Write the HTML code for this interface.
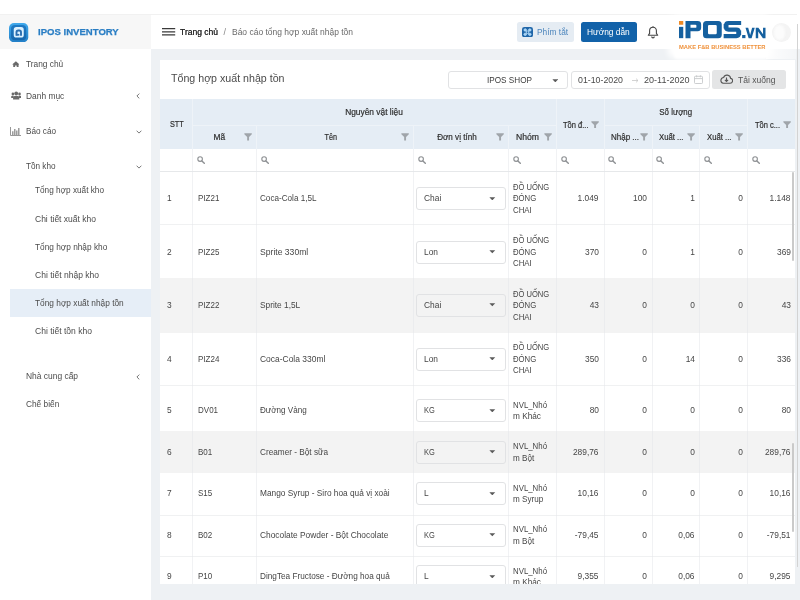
<!DOCTYPE html>
<html><head><meta charset="utf-8"><title>IPOS Inventory</title>
<style>
*{box-sizing:border-box;margin:0;padding:0}
html,body{width:800px;height:600px;overflow:hidden;background:#fff}
body{font-family:"Liberation Sans",sans-serif;font-size:9px;color:#4a4a4a;position:relative;filter:blur(0.300px)}
div,svg{position:absolute}
.t{white-space:nowrap;line-height:12px;height:12px}
.vl{width:1px}
.hl{height:1px}
.sel{border:1px solid #e1e2e4;border-radius:3px;background:#fff}
</style></head><body>
<div style="left:0;top:14px;width:151px;height:35.300px;background:#f7f7f7"></div>
<div style="left:151px;top:14px;width:649px;height:35.300px;background:#fff"></div>
<div style="left:0;top:49.300px;width:151px;height:551px;background:#fff"></div>
<div style="left:151px;top:49.300px;width:649px;height:551px;background:#eef1f4"></div>

<div style="left:0;top:14px;width:797px;height:1px;background:#f1f1f1"></div>
<svg style="left:9.250px;top:22.750px" width="19.250" height="19.250" viewBox="0 0 19.250 19.250"><defs><linearGradient id="g" x1="0" y1="0" x2="0" y2="1"><stop offset="0" stop-color="#3fa9ec"/><stop offset="1" stop-color="#2380c8"/></linearGradient><linearGradient id="g2" x1="0" y1="0" x2="0" y2="1"><stop offset="0" stop-color="#1f7ac4"/><stop offset="1" stop-color="#1767ad"/></linearGradient></defs><rect x="0" y="0" width="19.250" height="19.250" rx="5" fill="url(#g)"/><rect x="2" y="2" width="15.250" height="15.250" rx="4" fill="url(#g2)"/><rect x="4.750" y="4.100" width="10" height="10.500" rx="2.600" fill="#dcf1ff"/><path d="M7.500 12.700V9.300Q7.500 7.500 9.200 7.500H10.300Q12 7.500 12 9.300V12.700" fill="none" stroke="#2b6eb0" stroke-width="1.900"/><path d="M7.500 11.800H10.300" fill="none" stroke="#2b6eb0" stroke-width="1.700"/></svg>
<div class="t" style="left:37.50px;top:26.10px;font-size:9.5px;color:#2a7ec4;transform:scaleX(1.0063);transform-origin:0 50%;font-weight:bold;-webkit-text-stroke:0.250px #2a7ec4;">IPOS INVENTORY</div>
<div class="t" style="left:26.00px;top:57.90px;font-size:9px;color:#4c4c4c;transform:scaleX(0.9269);transform-origin:0 50%;">Trang chủ</div>
<div class="t" style="left:26.00px;top:89.80px;font-size:9px;color:#4c4c4c;transform:scaleX(0.9325);transform-origin:0 50%;">Danh mục</div>
<div class="t" style="left:26.00px;top:125.30px;font-size:9px;color:#4c4c4c;transform:scaleX(0.9084);transform-origin:0 50%;">Báo cáo</div>
<div class="t" style="left:26.00px;top:160.10px;font-size:9px;color:#4c4c4c;transform:scaleX(0.9071);transform-origin:0 50%;">Tồn kho</div>
<div style="left:10px;top:289.300px;width:141px;height:27.700px;background:#e6eef7"></div>
<div class="t" style="left:35.25px;top:184.10px;font-size:9px;color:#4c4c4c;transform:scaleX(0.9145);transform-origin:0 50%;">Tổng hợp xuất kho</div>
<div class="t" style="left:35.25px;top:212.60px;font-size:9px;color:#4c4c4c;transform:scaleX(0.9452);transform-origin:0 50%;">Chi tiết xuất kho</div>
<div class="t" style="left:35.25px;top:240.60px;font-size:9px;color:#4c4c4c;transform:scaleX(0.9208);transform-origin:0 50%;">Tổng hợp nhập kho</div>
<div class="t" style="left:35.25px;top:268.60px;font-size:9px;color:#4c4c4c;transform:scaleX(0.9475);transform-origin:0 50%;">Chi tiết nhập kho</div>
<div class="t" style="left:35.25px;top:296.90px;font-size:9px;color:#4c4c4c;transform:scaleX(0.9247);transform-origin:0 50%;">Tổng hợp xuất nhập tồn</div>
<div class="t" style="left:35.25px;top:325.00px;font-size:9px;color:#4c4c4c;transform:scaleX(0.9495);transform-origin:0 50%;">Chi tiết tồn kho</div>
<div class="t" style="left:26.00px;top:370.00px;font-size:9px;color:#4c4c4c;transform:scaleX(0.9363);transform-origin:0 50%;">Nhà cung cấp</div>
<div class="t" style="left:26.00px;top:398.10px;font-size:9px;color:#4c4c4c;transform:scaleX(0.9229);transform-origin:0 50%;">Chế biến</div>
<svg style="left:11.500px;top:60.500px" width="7.800" height="6.900" viewBox="0 0 9 8"><path d="M4.500 0.300L0.200 4h1.200v3.600h2.200V5.200h1.800v2.400h2.200V4h1.200z" fill="#6a6a6a"/></svg>
<svg style="left:10.500px;top:91.200px" width="10.400" height="9" viewBox="0 0 11 9" preserveAspectRatio="none"><circle cx="5.500" cy="2.400" r="2" fill="#6a6a6a"/><circle cx="2" cy="3" r="1.400" fill="#6a6a6a"/><circle cx="9" cy="3" r="1.400" fill="#6a6a6a"/><path d="M2.200 8.600V6.600q0-1.600 1.600-1.600h3.400q1.600 0 1.600 1.600v2z" fill="#6a6a6a"/><path d="M0.200 7V5.800q0-1 1-1h1.600v2.200zM10.800 7V5.800q0-1-1-1H8.200v2.200z" fill="#6a6a6a"/></svg>
<svg style="left:10px;top:126.500px" width="11" height="9" viewBox="0 0 11 9"><path d="M0.500 0v8.500H11" fill="none" stroke="#8c8c8c" stroke-width="0.900"/><path d="M2.800 8V4.200M4.800 8V2M6.800 8V3.400M8.800 8V1" stroke="#8c8c8c" stroke-width="1.300"/></svg>
<svg style="left:136px;top:92.5px" width="4" height="6" viewBox="0 0 4 6"><path d="M3.300 0.600L0.900 3l2.400 2.400" fill="none" stroke="#777" stroke-width="1"/></svg>
<svg style="left:135.5px;top:129.5px" width="6" height="4" viewBox="0 0 6 4"><path d="M0.600 0.700L3 3.100 5.400 0.700" fill="none" stroke="#777" stroke-width="1"/></svg>
<svg style="left:135.5px;top:164.5px" width="6" height="4" viewBox="0 0 6 4"><path d="M0.600 0.700L3 3.100 5.400 0.700" fill="none" stroke="#777" stroke-width="1"/></svg>
<svg style="left:136px;top:373.5px" width="4" height="6" viewBox="0 0 4 6"><path d="M3.300 0.600L0.900 3l2.400 2.400" fill="none" stroke="#777" stroke-width="1"/></svg>
<svg style="left:162px;top:28px" width="14" height="8" viewBox="0 0 14 8"><path d="M0 0.700h13.200M0 3.800h13.200M0 6.900h13.200" stroke="#3a3a3a" stroke-width="1.200"/></svg>
<div class="t" style="left:180.25px;top:26.00px;font-size:9px;color:#2b2b2b;transform:scaleX(0.9455);transform-origin:0 50%;text-shadow:0 0 0.400px #2b2b2b;">Trang chủ</div>
<div class="t" style="left:223.50px;top:26.00px;font-size:9px;color:#8a8a8a;transform:scaleX(1.0000);transform-origin:0 50%;">/</div>
<div class="t" style="left:232.00px;top:26.00px;font-size:9px;color:#6a6a6a;transform:scaleX(0.9416);transform-origin:0 50%;">Báo cáo tổng hợp xuất nhập tồn</div>
<div style="left:516.800px;top:22.200px;width:57.700px;height:19.600px;background:#e5ecf3;border-radius:2.500px"></div>
<svg style="left:522px;top:27px" width="11" height="10.300" viewBox="0 0 10 10" preserveAspectRatio="none"><rect width="10" height="10" rx="2.200" fill="#1f66a9"/><g fill="#9fd0f5" stroke="#b9defa" stroke-width="0.700"><rect x="3.900" y="3.900" width="2.200" height="2.200" fill="none"/><circle cx="2.900" cy="2.900" r="1.150"/><circle cx="7.100" cy="2.900" r="1.150"/><circle cx="2.900" cy="7.100" r="1.150"/><circle cx="7.100" cy="7.100" r="1.150"/></g></svg>
<div class="t" style="left:536.70px;top:26.00px;font-size:9px;color:#4d86bd;transform:scaleX(0.9300);transform-origin:0 50%;">Phím tắt</div>
<div style="left:580.500px;top:22.200px;width:56.500px;height:19.600px;background:#1262a9;border-radius:2.500px"></div>
<div class="t" style="left:586.50px;top:26.00px;font-size:9px;color:#fff;transform:scaleX(0.9300);transform-origin:0 50%;">Hướng dẫn</div>
<svg style="left:646.500px;top:25.500px" width="12" height="13" viewBox="0 0 12 13"><path d="M6 1.200c-2.200 0-3.400 1.600-3.400 3.600v2.600l-1.300 1.800h9.400l-1.300-1.800v-2.600c0-2-1.200-3.600-3.400-3.600z" fill="none" stroke="#444" stroke-width="1.100" stroke-linejoin="round"/><path d="M4.700 10.600a1.300 1.300 0 0 0 2.600 0" fill="none" stroke="#444" stroke-width="1.100"/><path d="M6 0.300v1" stroke="#444" stroke-width="1.100"/></svg>
<div style="left:160.300px;top:59.500px;width:634.700px;height:524.2px;background:#fff"></div>
<div class="t" style="left:170.50px;top:72.10px;font-size:11.8px;color:#4a4a4a;transform:scaleX(0.9020);transform-origin:0 50%;">Tổng hợp xuất nhập tồn</div>
<div class="sel" style="left:447.500px;top:70.500px;width:120.500px;height:18px"></div>
<div class="t" style="left:487.25px;top:74.00px;font-size:8.6px;color:#3a3a3a;transform:scaleX(0.9511);transform-origin:0 50%;">IPOS SHOP</div>
<svg style="left:551.5px;top:78.5px" width="6.600" height="3.700" viewBox="0 0 7 4"><path d="M0.300 0.300h6.400L3.500 3.600z" fill="#5a5a5a"/></svg>
<div class="sel" style="left:571px;top:70.500px;width:138.500px;height:18px"></div>
<div class="t" style="left:577.70px;top:74.00px;font-size:9px;color:#4a4a4a;transform:scaleX(0.9774);transform-origin:0 50%;">01-10-2020</div>
<svg style="left:631.500px;top:77.500px" width="7" height="5" viewBox="0 0 7 5"><path d="M0 2.500h6M4 0.600l2 1.900-2 1.900" fill="none" stroke="#c8c8c8" stroke-width="0.800"/></svg>
<div class="t" style="left:643.85px;top:74.00px;font-size:9px;color:#4a4a4a;transform:scaleX(1.0028);transform-origin:0 50%;">20-11-2020</div>
<svg style="left:693.500px;top:75px" width="9" height="9" viewBox="0 0 9 9"><rect x="0.500" y="1.300" width="8" height="7.200" rx="0.800" fill="none" stroke="#c6c8cb" stroke-width="0.900"/><path d="M0.500 3.600h8M2.600 0.300v2M6.400 0.300v2" stroke="#c6c8cb" stroke-width="0.900"/></svg>
<div style="left:712.200px;top:70.200px;width:73.800px;height:18.400px;background:#e4e5e6;border-radius:2.500px"></div>
<svg style="left:720px;top:74px" width="13" height="10" viewBox="0 0 13 10"><path d="M3.300 9.300h6.800a2.500 2.500 0 0 0 .5-4.950 3.600 3.600 0 0 0-7-0.800A2.900 2.900 0 0 0 3.300 9.300z" fill="none" stroke="#555" stroke-width="1.100"/><path d="M6.500 3.600v3.600M4.900 5.800l1.600 1.600 1.600-1.600" fill="none" stroke="#555" stroke-width="1.100"/></svg>
<div class="t" style="left:738.00px;top:73.60px;font-size:9px;color:#555;transform:scaleX(0.9488);transform-origin:0 50%;">Tải xuống</div>
<div style="left:160.300px;top:99px;width:634.700px;height:50.200px;background:#e5edf5"></div>
<div class="hl" style="left:192.5px;top:125.250px;width:364.0px;background:#eef3f8"></div>
<div class="hl" style="left:604px;top:125.250px;width:143.5px;background:#eef3f8"></div>
<div class="vl" style="left:192.0px;top:99px;height:50.500px;background:#eef3f8"></div>
<div class="vl" style="left:556.0px;top:99px;height:50.500px;background:#eef3f8"></div>
<div class="vl" style="left:603.5px;top:99px;height:50.500px;background:#eef3f8"></div>
<div class="vl" style="left:747.0px;top:99px;height:50.500px;background:#eef3f8"></div>
<div class="vl" style="left:256.0px;top:125.500px;height:24px;background:#eef3f8"></div>
<div class="vl" style="left:413.0px;top:125.500px;height:24px;background:#eef3f8"></div>
<div class="vl" style="left:508.0px;top:125.500px;height:24px;background:#eef3f8"></div>
<div class="vl" style="left:651.5px;top:125.500px;height:24px;background:#eef3f8"></div>
<div class="vl" style="left:699.0px;top:125.500px;height:24px;background:#eef3f8"></div>
<div class="t" style="left:169.90px;top:117.90px;font-size:9px;color:#2e2e2e;transform:scaleX(0.8118);transform-origin:0 50%;-webkit-text-stroke:0.200px #2e2e2e;">STT</div>
<div class="t" style="left:343.38px;top:105.90px;font-size:9px;color:#2e2e2e;transform:scaleX(0.9309);transform-origin:50% 50%;-webkit-text-stroke:0.200px #2e2e2e;">Nguyên vật liệu</div>
<div class="t" style="left:656.88px;top:105.90px;font-size:9px;color:#2e2e2e;transform:scaleX(0.8746);transform-origin:50% 50%;-webkit-text-stroke:0.200px #2e2e2e;">Số lượng</div>
<div class="t" style="left:213.25px;top:131.00px;font-size:9px;color:#2e2e2e;transform:scaleX(0.9300);transform-origin:50% 50%;-webkit-text-stroke:0.200px #2e2e2e;">Mã</div>
<div class="t" style="left:322.75px;top:131.00px;font-size:9px;color:#2e2e2e;transform:scaleX(0.8060);transform-origin:50% 50%;-webkit-text-stroke:0.200px #2e2e2e;">Tên</div>
<div class="t" style="left:434.54px;top:131.00px;font-size:9px;color:#2e2e2e;transform:scaleX(0.8994);transform-origin:50% 50%;-webkit-text-stroke:0.200px #2e2e2e;">Đơn vị tính</div>
<div class="t" style="left:515.75px;top:131.00px;font-size:9px;color:#2e2e2e;transform:scaleX(0.9580);transform-origin:0 50%;-webkit-text-stroke:0.200px #2e2e2e;">Nhóm</div>
<div class="t" style="left:563.25px;top:118.50px;font-size:9px;color:#2e2e2e;transform:scaleX(0.8356);transform-origin:0 50%;-webkit-text-stroke:0.200px #2e2e2e;">Tồn đ...</div>
<div class="t" style="left:610.75px;top:131.00px;font-size:9px;color:#2e2e2e;transform:scaleX(0.8884);transform-origin:0 50%;-webkit-text-stroke:0.200px #2e2e2e;">Nhập ...</div>
<div class="t" style="left:658.75px;top:131.00px;font-size:9px;color:#2e2e2e;transform:scaleX(0.8592);transform-origin:0 50%;-webkit-text-stroke:0.200px #2e2e2e;">Xuất ...</div>
<div class="t" style="left:706.75px;top:131.00px;font-size:9px;color:#2e2e2e;transform:scaleX(0.8592);transform-origin:0 50%;-webkit-text-stroke:0.200px #2e2e2e;">Xuất ...</div>
<div class="t" style="left:755.00px;top:118.50px;font-size:9px;color:#2e2e2e;transform:scaleX(0.8331);transform-origin:0 50%;-webkit-text-stroke:0.200px #2e2e2e;">Tồn c...</div>
<svg style="left:243.75px;top:133.2px" width="8.200" height="7.800" viewBox="0 0 9 9"><path d="M0.2 0.3h8.600v1.100L5.600 4.700V8.600H3.400V4.700L0.200 1.400z" fill="#a0a5aa"/></svg>
<svg style="left:400.75px;top:133.2px" width="8.200" height="7.800" viewBox="0 0 9 9"><path d="M0.2 0.3h8.600v1.100L5.600 4.700V8.600H3.400V4.700L0.200 1.400z" fill="#a0a5aa"/></svg>
<svg style="left:496.25px;top:133.2px" width="8.200" height="7.800" viewBox="0 0 9 9"><path d="M0.2 0.3h8.600v1.100L5.600 4.700V8.600H3.400V4.700L0.200 1.400z" fill="#a0a5aa"/></svg>
<svg style="left:543.75px;top:133.2px" width="8.200" height="7.800" viewBox="0 0 9 9"><path d="M0.2 0.3h8.600v1.100L5.600 4.700V8.600H3.400V4.700L0.200 1.400z" fill="#a0a5aa"/></svg>
<svg style="left:591.25px;top:120.7px" width="8.200" height="7.800" viewBox="0 0 9 9"><path d="M0.2 0.3h8.600v1.100L5.600 4.700V8.600H3.400V4.700L0.200 1.400z" fill="#a0a5aa"/></svg>
<svg style="left:639.5px;top:133.2px" width="8.200" height="7.800" viewBox="0 0 9 9"><path d="M0.2 0.3h8.600v1.100L5.600 4.700V8.600H3.400V4.700L0.200 1.400z" fill="#a0a5aa"/></svg>
<svg style="left:687.1px;top:133.2px" width="8.200" height="7.800" viewBox="0 0 9 9"><path d="M0.2 0.3h8.600v1.100L5.600 4.700V8.600H3.400V4.700L0.200 1.400z" fill="#a0a5aa"/></svg>
<svg style="left:735px;top:133.2px" width="8.200" height="7.800" viewBox="0 0 9 9"><path d="M0.2 0.3h8.600v1.100L5.600 4.700V8.600H3.400V4.700L0.200 1.400z" fill="#a0a5aa"/></svg>
<svg style="left:783px;top:120.7px" width="8.200" height="7.800" viewBox="0 0 9 9"><path d="M0.2 0.3h8.600v1.100L5.600 4.700V8.600H3.400V4.700L0.200 1.400z" fill="#a0a5aa"/></svg>
<svg style="left:196.7px;top:156px" width="8" height="8" viewBox="0 0 8 8"><circle cx="3.100" cy="3.100" r="2.300" fill="none" stroke="#8d9093" stroke-width="1.100"/><path d="M4.900 4.900L7.300 7.300" stroke="#8d9093" stroke-width="1.400" stroke-linecap="round"/></svg>
<svg style="left:260.7px;top:156px" width="8" height="8" viewBox="0 0 8 8"><circle cx="3.100" cy="3.100" r="2.300" fill="none" stroke="#8d9093" stroke-width="1.100"/><path d="M4.900 4.900L7.300 7.300" stroke="#8d9093" stroke-width="1.400" stroke-linecap="round"/></svg>
<svg style="left:417.7px;top:156px" width="8" height="8" viewBox="0 0 8 8"><circle cx="3.100" cy="3.100" r="2.300" fill="none" stroke="#8d9093" stroke-width="1.100"/><path d="M4.900 4.900L7.300 7.300" stroke="#8d9093" stroke-width="1.400" stroke-linecap="round"/></svg>
<svg style="left:512.7px;top:156px" width="8" height="8" viewBox="0 0 8 8"><circle cx="3.100" cy="3.100" r="2.300" fill="none" stroke="#8d9093" stroke-width="1.100"/><path d="M4.900 4.900L7.300 7.300" stroke="#8d9093" stroke-width="1.400" stroke-linecap="round"/></svg>
<svg style="left:560.7px;top:156px" width="8" height="8" viewBox="0 0 8 8"><circle cx="3.100" cy="3.100" r="2.300" fill="none" stroke="#8d9093" stroke-width="1.100"/><path d="M4.900 4.900L7.300 7.300" stroke="#8d9093" stroke-width="1.400" stroke-linecap="round"/></svg>
<svg style="left:608.2px;top:156px" width="8" height="8" viewBox="0 0 8 8"><circle cx="3.100" cy="3.100" r="2.300" fill="none" stroke="#8d9093" stroke-width="1.100"/><path d="M4.900 4.900L7.300 7.300" stroke="#8d9093" stroke-width="1.400" stroke-linecap="round"/></svg>
<svg style="left:656.2px;top:156px" width="8" height="8" viewBox="0 0 8 8"><circle cx="3.100" cy="3.100" r="2.300" fill="none" stroke="#8d9093" stroke-width="1.100"/><path d="M4.900 4.900L7.300 7.300" stroke="#8d9093" stroke-width="1.400" stroke-linecap="round"/></svg>
<svg style="left:703.7px;top:156px" width="8" height="8" viewBox="0 0 8 8"><circle cx="3.100" cy="3.100" r="2.300" fill="none" stroke="#8d9093" stroke-width="1.100"/><path d="M4.900 4.900L7.300 7.300" stroke="#8d9093" stroke-width="1.400" stroke-linecap="round"/></svg>
<svg style="left:751.7px;top:156px" width="8" height="8" viewBox="0 0 8 8"><circle cx="3.100" cy="3.100" r="2.300" fill="none" stroke="#8d9093" stroke-width="1.100"/><path d="M4.900 4.900L7.300 7.300" stroke="#8d9093" stroke-width="1.400" stroke-linecap="round"/></svg>
<div class="hl" style="left:160.300px;top:171px;width:634.700px;background:#e6e8ea"></div>
<div class="t" style="left:166.70px;top:192.35px;font-size:9px;color:#464646;transform:scaleX(0.9300);transform-origin:0 50%;">1</div>
<div class="t" style="left:197.50px;top:192.35px;font-size:9px;color:#464646;transform:scaleX(0.8900);transform-origin:0 50%;">PIZ21</div>
<div class="t" style="left:260.40px;top:192.35px;font-size:9px;color:#464646;transform:scaleX(0.9035);transform-origin:0 50%;">Coca-Cola 1,5L</div>
<div class="sel" style="left:416.250px;top:187.3px;width:89.400px;height:23px;background:#fff"></div>
<div class="t" style="left:424.00px;top:192.35px;font-size:9px;color:#464646;transform:scaleX(0.9319);transform-origin:0 50%;">Chai</div>
<svg style="left:489.2px;top:196.7px" width="6.600" height="3.700" viewBox="0 0 7 4"><path d="M0.300 0.300h6.400L3.500 3.600z" fill="#5a5a5a"/></svg>
<div class="t" style="left:513.00px;top:180.75px;font-size:9px;color:#464646;transform:scaleX(0.8430);transform-origin:0 50%;">ĐỒ UỐNG</div>
<div class="t" style="left:513.00px;top:192.35px;font-size:9px;color:#464646;transform:scaleX(0.8611);transform-origin:0 50%;">ĐÓNG</div>
<div class="t" style="left:513.00px;top:203.95px;font-size:9px;color:#464646;transform:scaleX(0.8720);transform-origin:0 50%;">CHAI</div>
<div class="t" style="left:576.48px;top:192.35px;font-size:9px;color:#464646;transform:scaleX(0.9300);transform-origin:100% 50%;">1.049</div>
<div class="t" style="left:631.58px;top:192.35px;font-size:9px;color:#464646;transform:scaleX(0.9300);transform-origin:100% 50%;">100</div>
<div class="t" style="left:689.79px;top:192.35px;font-size:9px;color:#464646;transform:scaleX(0.9300);transform-origin:100% 50%;">1</div>
<div class="t" style="left:737.79px;top:192.35px;font-size:9px;color:#464646;transform:scaleX(0.9300);transform-origin:100% 50%;">0</div>
<div class="t" style="left:768.28px;top:192.35px;font-size:9px;color:#464646;transform:scaleX(0.9300);transform-origin:100% 50%;">1.148</div>
<div class="hl" style="left:160.300px;top:224.0px;width:634.700px;background:#f0f1f2"></div>
<div class="t" style="left:166.70px;top:245.70px;font-size:9px;color:#464646;transform:scaleX(0.9300);transform-origin:0 50%;">2</div>
<div class="t" style="left:197.50px;top:245.70px;font-size:9px;color:#464646;transform:scaleX(0.8900);transform-origin:0 50%;">PIZ25</div>
<div class="t" style="left:260.40px;top:245.70px;font-size:9px;color:#464646;transform:scaleX(0.9550);transform-origin:0 50%;">Sprite 330ml</div>
<div class="sel" style="left:416.250px;top:240.7px;width:89.400px;height:23px;background:#fff"></div>
<div class="t" style="left:424.00px;top:245.70px;font-size:9px;color:#464646;transform:scaleX(0.9300);transform-origin:0 50%;">Lon</div>
<svg style="left:489.2px;top:250.0px" width="6.600" height="3.700" viewBox="0 0 7 4"><path d="M0.300 0.300h6.400L3.500 3.600z" fill="#5a5a5a"/></svg>
<div class="t" style="left:513.00px;top:234.10px;font-size:9px;color:#464646;transform:scaleX(0.8430);transform-origin:0 50%;">ĐỒ UỐNG</div>
<div class="t" style="left:513.00px;top:245.70px;font-size:9px;color:#464646;transform:scaleX(0.8611);transform-origin:0 50%;">ĐÓNG</div>
<div class="t" style="left:513.00px;top:257.30px;font-size:9px;color:#464646;transform:scaleX(0.8720);transform-origin:0 50%;">CHAI</div>
<div class="t" style="left:583.98px;top:245.70px;font-size:9px;color:#464646;transform:scaleX(0.9300);transform-origin:100% 50%;">370</div>
<div class="t" style="left:641.59px;top:245.70px;font-size:9px;color:#464646;transform:scaleX(0.9300);transform-origin:100% 50%;">0</div>
<div class="t" style="left:689.79px;top:245.70px;font-size:9px;color:#464646;transform:scaleX(0.9300);transform-origin:100% 50%;">1</div>
<div class="t" style="left:737.79px;top:245.70px;font-size:9px;color:#464646;transform:scaleX(0.9300);transform-origin:100% 50%;">0</div>
<div class="t" style="left:775.78px;top:245.70px;font-size:9px;color:#464646;transform:scaleX(0.9300);transform-origin:100% 50%;">369</div>
<div style="left:160.300px;top:278.25px;width:634.700px;height:54.25px;background:#f3f3f3"></div>
<div class="t" style="left:166.70px;top:299.10px;font-size:9px;color:#464646;transform:scaleX(0.9300);transform-origin:0 50%;">3</div>
<div class="t" style="left:197.50px;top:299.10px;font-size:9px;color:#464646;transform:scaleX(0.8900);transform-origin:0 50%;">PIZ22</div>
<div class="t" style="left:260.40px;top:299.10px;font-size:9px;color:#464646;transform:scaleX(0.9247);transform-origin:0 50%;">Sprite 1,5L</div>
<div class="sel" style="left:416.250px;top:294.1px;width:89.400px;height:23px;background:#f3f3f3"></div>
<div class="t" style="left:424.00px;top:299.10px;font-size:9px;color:#464646;transform:scaleX(0.9319);transform-origin:0 50%;">Chai</div>
<svg style="left:489.2px;top:303.4px" width="6.600" height="3.700" viewBox="0 0 7 4"><path d="M0.300 0.300h6.400L3.500 3.600z" fill="#5a5a5a"/></svg>
<div class="t" style="left:513.00px;top:287.50px;font-size:9px;color:#464646;transform:scaleX(0.8430);transform-origin:0 50%;">ĐỒ UỐNG</div>
<div class="t" style="left:513.00px;top:299.10px;font-size:9px;color:#464646;transform:scaleX(0.8611);transform-origin:0 50%;">ĐÓNG</div>
<div class="t" style="left:513.00px;top:310.70px;font-size:9px;color:#464646;transform:scaleX(0.8720);transform-origin:0 50%;">CHAI</div>
<div class="t" style="left:588.99px;top:299.10px;font-size:9px;color:#464646;transform:scaleX(0.9300);transform-origin:100% 50%;">43</div>
<div class="t" style="left:641.59px;top:299.10px;font-size:9px;color:#464646;transform:scaleX(0.9300);transform-origin:100% 50%;">0</div>
<div class="t" style="left:689.79px;top:299.10px;font-size:9px;color:#464646;transform:scaleX(0.9300);transform-origin:100% 50%;">0</div>
<div class="t" style="left:737.79px;top:299.10px;font-size:9px;color:#464646;transform:scaleX(0.9300);transform-origin:100% 50%;">0</div>
<div class="t" style="left:780.79px;top:299.10px;font-size:9px;color:#464646;transform:scaleX(0.9300);transform-origin:100% 50%;">43</div>
<div class="t" style="left:166.70px;top:352.50px;font-size:9px;color:#464646;transform:scaleX(0.9300);transform-origin:0 50%;">4</div>
<div class="t" style="left:197.50px;top:352.50px;font-size:9px;color:#464646;transform:scaleX(0.8900);transform-origin:0 50%;">PIZ24</div>
<div class="t" style="left:260.40px;top:352.50px;font-size:9px;color:#464646;transform:scaleX(0.9391);transform-origin:0 50%;">Coca-Cola 330ml</div>
<div class="sel" style="left:416.250px;top:347.5px;width:89.400px;height:23px;background:#fff"></div>
<div class="t" style="left:424.00px;top:352.50px;font-size:9px;color:#464646;transform:scaleX(0.9300);transform-origin:0 50%;">Lon</div>
<svg style="left:489.2px;top:356.8px" width="6.600" height="3.700" viewBox="0 0 7 4"><path d="M0.300 0.300h6.400L3.500 3.600z" fill="#5a5a5a"/></svg>
<div class="t" style="left:513.00px;top:340.90px;font-size:9px;color:#464646;transform:scaleX(0.8430);transform-origin:0 50%;">ĐỒ UỐNG</div>
<div class="t" style="left:513.00px;top:352.50px;font-size:9px;color:#464646;transform:scaleX(0.8611);transform-origin:0 50%;">ĐÓNG</div>
<div class="t" style="left:513.00px;top:364.10px;font-size:9px;color:#464646;transform:scaleX(0.8720);transform-origin:0 50%;">CHAI</div>
<div class="t" style="left:583.98px;top:352.50px;font-size:9px;color:#464646;transform:scaleX(0.9300);transform-origin:100% 50%;">350</div>
<div class="t" style="left:641.59px;top:352.50px;font-size:9px;color:#464646;transform:scaleX(0.9300);transform-origin:100% 50%;">0</div>
<div class="t" style="left:684.79px;top:352.50px;font-size:9px;color:#464646;transform:scaleX(0.9300);transform-origin:100% 50%;">14</div>
<div class="t" style="left:737.79px;top:352.50px;font-size:9px;color:#464646;transform:scaleX(0.9300);transform-origin:100% 50%;">0</div>
<div class="t" style="left:775.78px;top:352.50px;font-size:9px;color:#464646;transform:scaleX(0.9300);transform-origin:100% 50%;">336</div>
<div class="hl" style="left:160.300px;top:384.5px;width:634.700px;background:#f0f1f2"></div>
<div class="t" style="left:166.70px;top:404.35px;font-size:9px;color:#464646;transform:scaleX(0.9300);transform-origin:0 50%;">5</div>
<div class="t" style="left:197.50px;top:404.35px;font-size:9px;color:#464646;transform:scaleX(0.8900);transform-origin:0 50%;">DV01</div>
<div class="t" style="left:260.40px;top:404.35px;font-size:9px;color:#464646;transform:scaleX(0.8988);transform-origin:0 50%;">Đường Vàng</div>
<div class="sel" style="left:416.250px;top:399.4px;width:89.400px;height:23px;background:#fff"></div>
<div class="t" style="left:424.00px;top:404.35px;font-size:9px;color:#464646;transform:scaleX(0.8305);transform-origin:0 50%;">KG</div>
<svg style="left:489.2px;top:408.7px" width="6.600" height="3.700" viewBox="0 0 7 4"><path d="M0.300 0.300h6.400L3.500 3.600z" fill="#5a5a5a"/></svg>
<div class="t" style="left:513.00px;top:398.55px;font-size:9px;color:#464646;transform:scaleX(0.8712);transform-origin:0 50%;">NVL_Nhó</div>
<div class="t" style="left:513.00px;top:410.15px;font-size:9px;color:#464646;transform:scaleX(0.9177);transform-origin:0 50%;">m Khác</div>
<div class="t" style="left:588.99px;top:404.35px;font-size:9px;color:#464646;transform:scaleX(0.9300);transform-origin:100% 50%;">80</div>
<div class="t" style="left:641.59px;top:404.35px;font-size:9px;color:#464646;transform:scaleX(0.9300);transform-origin:100% 50%;">0</div>
<div class="t" style="left:689.79px;top:404.35px;font-size:9px;color:#464646;transform:scaleX(0.9300);transform-origin:100% 50%;">0</div>
<div class="t" style="left:737.79px;top:404.35px;font-size:9px;color:#464646;transform:scaleX(0.9300);transform-origin:100% 50%;">0</div>
<div class="t" style="left:780.79px;top:404.35px;font-size:9px;color:#464646;transform:scaleX(0.9300);transform-origin:100% 50%;">80</div>
<div style="left:160.300px;top:431px;width:634.700px;height:42px;background:#f3f3f3"></div>
<div class="t" style="left:166.70px;top:445.80px;font-size:9px;color:#464646;transform:scaleX(0.9300);transform-origin:0 50%;">6</div>
<div class="t" style="left:197.50px;top:445.80px;font-size:9px;color:#464646;transform:scaleX(0.8900);transform-origin:0 50%;">B01</div>
<div class="t" style="left:260.40px;top:445.80px;font-size:9px;color:#464646;transform:scaleX(0.9135);transform-origin:0 50%;">Creamer - Bột sữa</div>
<div class="sel" style="left:416.250px;top:440.8px;width:89.400px;height:23px;background:#f3f3f3"></div>
<div class="t" style="left:424.00px;top:445.80px;font-size:9px;color:#464646;transform:scaleX(0.8305);transform-origin:0 50%;">KG</div>
<svg style="left:489.2px;top:450.1px" width="6.600" height="3.700" viewBox="0 0 7 4"><path d="M0.300 0.300h6.400L3.500 3.600z" fill="#5a5a5a"/></svg>
<div class="t" style="left:513.00px;top:440.00px;font-size:9px;color:#464646;transform:scaleX(0.8712);transform-origin:0 50%;">NVL_Nhó</div>
<div class="t" style="left:513.00px;top:451.60px;font-size:9px;color:#464646;transform:scaleX(0.9000);transform-origin:0 50%;">m Bột</div>
<div class="t" style="left:571.47px;top:445.80px;font-size:9px;color:#464646;transform:scaleX(0.9300);transform-origin:100% 50%;">289,76</div>
<div class="t" style="left:641.59px;top:445.80px;font-size:9px;color:#464646;transform:scaleX(0.9300);transform-origin:100% 50%;">0</div>
<div class="t" style="left:689.79px;top:445.80px;font-size:9px;color:#464646;transform:scaleX(0.9300);transform-origin:100% 50%;">0</div>
<div class="t" style="left:737.79px;top:445.80px;font-size:9px;color:#464646;transform:scaleX(0.9300);transform-origin:100% 50%;">0</div>
<div class="t" style="left:763.27px;top:445.80px;font-size:9px;color:#464646;transform:scaleX(0.9300);transform-origin:100% 50%;">289,76</div>
<div class="t" style="left:166.70px;top:487.30px;font-size:9px;color:#464646;transform:scaleX(0.9300);transform-origin:0 50%;">7</div>
<div class="t" style="left:197.50px;top:487.30px;font-size:9px;color:#464646;transform:scaleX(0.8900);transform-origin:0 50%;">S15</div>
<div class="t" style="left:260.40px;top:487.30px;font-size:9px;color:#464646;transform:scaleX(0.9226);transform-origin:0 50%;">Mango Syrup - Siro hoa quả vị xoài</div>
<div class="sel" style="left:416.250px;top:482.3px;width:89.400px;height:23px;background:#fff"></div>
<div class="t" style="left:424.00px;top:487.30px;font-size:9px;color:#464646;transform:scaleX(0.9300);transform-origin:0 50%;">L</div>
<svg style="left:489.2px;top:491.6px" width="6.600" height="3.700" viewBox="0 0 7 4"><path d="M0.300 0.300h6.400L3.500 3.600z" fill="#5a5a5a"/></svg>
<div class="t" style="left:513.00px;top:481.50px;font-size:9px;color:#464646;transform:scaleX(0.8712);transform-origin:0 50%;">NVL_Nhó</div>
<div class="t" style="left:513.00px;top:493.10px;font-size:9px;color:#464646;transform:scaleX(0.9000);transform-origin:0 50%;">m Syrup</div>
<div class="t" style="left:576.48px;top:487.30px;font-size:9px;color:#464646;transform:scaleX(0.9300);transform-origin:100% 50%;">10,16</div>
<div class="t" style="left:641.59px;top:487.30px;font-size:9px;color:#464646;transform:scaleX(0.9300);transform-origin:100% 50%;">0</div>
<div class="t" style="left:689.79px;top:487.30px;font-size:9px;color:#464646;transform:scaleX(0.9300);transform-origin:100% 50%;">0</div>
<div class="t" style="left:737.79px;top:487.30px;font-size:9px;color:#464646;transform:scaleX(0.9300);transform-origin:100% 50%;">0</div>
<div class="t" style="left:768.28px;top:487.30px;font-size:9px;color:#464646;transform:scaleX(0.9300);transform-origin:100% 50%;">10,16</div>
<div class="hl" style="left:160.300px;top:514.5px;width:634.700px;background:#f0f1f2"></div>
<div class="t" style="left:166.70px;top:528.80px;font-size:9px;color:#464646;transform:scaleX(0.9300);transform-origin:0 50%;">8</div>
<div class="t" style="left:197.50px;top:528.80px;font-size:9px;color:#464646;transform:scaleX(0.8900);transform-origin:0 50%;">B02</div>
<div class="t" style="left:260.40px;top:528.80px;font-size:9px;color:#464646;transform:scaleX(0.9292);transform-origin:0 50%;">Chocolate Powder - Bột Chocolate</div>
<div class="sel" style="left:416.250px;top:523.8px;width:89.400px;height:23px;background:#fff"></div>
<div class="t" style="left:424.00px;top:528.80px;font-size:9px;color:#464646;transform:scaleX(0.8305);transform-origin:0 50%;">KG</div>
<svg style="left:489.2px;top:533.1px" width="6.600" height="3.700" viewBox="0 0 7 4"><path d="M0.300 0.300h6.400L3.500 3.600z" fill="#5a5a5a"/></svg>
<div class="t" style="left:513.00px;top:523.00px;font-size:9px;color:#464646;transform:scaleX(0.8712);transform-origin:0 50%;">NVL_Nhó</div>
<div class="t" style="left:513.00px;top:534.60px;font-size:9px;color:#464646;transform:scaleX(0.9000);transform-origin:0 50%;">m Bột</div>
<div class="t" style="left:573.48px;top:528.80px;font-size:9px;color:#464646;transform:scaleX(0.9300);transform-origin:100% 50%;">-79,45</div>
<div class="t" style="left:641.59px;top:528.80px;font-size:9px;color:#464646;transform:scaleX(0.9300);transform-origin:100% 50%;">0</div>
<div class="t" style="left:677.28px;top:528.80px;font-size:9px;color:#464646;transform:scaleX(0.9300);transform-origin:100% 50%;">0,06</div>
<div class="t" style="left:737.79px;top:528.80px;font-size:9px;color:#464646;transform:scaleX(0.9300);transform-origin:100% 50%;">0</div>
<div class="t" style="left:765.28px;top:528.80px;font-size:9px;color:#464646;transform:scaleX(0.9300);transform-origin:100% 50%;">-79,51</div>
<div class="hl" style="left:160.300px;top:556.0px;width:634.700px;background:#f0f1f2"></div>
<div class="t" style="left:166.70px;top:570.30px;font-size:9px;color:#464646;transform:scaleX(0.9300);transform-origin:0 50%;">9</div>
<div class="t" style="left:197.50px;top:570.30px;font-size:9px;color:#464646;transform:scaleX(0.8900);transform-origin:0 50%;">P10</div>
<div class="t" style="left:260.40px;top:570.30px;font-size:9px;color:#464646;transform:scaleX(0.9134);transform-origin:0 50%;">DingTea Fructose - Đường hoa quả</div>
<div class="sel" style="left:416.250px;top:565.3px;width:89.400px;height:23px;background:#fff"></div>
<div class="t" style="left:424.00px;top:570.30px;font-size:9px;color:#464646;transform:scaleX(0.9300);transform-origin:0 50%;">L</div>
<svg style="left:489.2px;top:574.6px" width="6.600" height="3.700" viewBox="0 0 7 4"><path d="M0.300 0.300h6.400L3.500 3.600z" fill="#5a5a5a"/></svg>
<div class="t" style="left:513.00px;top:564.50px;font-size:9px;color:#464646;transform:scaleX(0.8712);transform-origin:0 50%;">NVL_Nhó</div>
<div class="t" style="left:513.00px;top:576.10px;font-size:9px;color:#464646;transform:scaleX(0.9177);transform-origin:0 50%;">m Khác</div>
<div class="t" style="left:576.48px;top:570.30px;font-size:9px;color:#464646;transform:scaleX(0.9300);transform-origin:100% 50%;">9,355</div>
<div class="t" style="left:641.59px;top:570.30px;font-size:9px;color:#464646;transform:scaleX(0.9300);transform-origin:100% 50%;">0</div>
<div class="t" style="left:677.28px;top:570.30px;font-size:9px;color:#464646;transform:scaleX(0.9300);transform-origin:100% 50%;">0,06</div>
<div class="t" style="left:737.79px;top:570.30px;font-size:9px;color:#464646;transform:scaleX(0.9300);transform-origin:100% 50%;">0</div>
<div class="t" style="left:768.28px;top:570.30px;font-size:9px;color:#464646;transform:scaleX(0.9300);transform-origin:100% 50%;">9,295</div>
<div class="vl" style="left:192.0px;top:149.500px;height:434.20000000000005px;background:rgba(228,230,233,.5)"></div>
<div class="vl" style="left:256.0px;top:149.500px;height:434.20000000000005px;background:rgba(228,230,233,.5)"></div>
<div class="vl" style="left:413.0px;top:149.500px;height:434.20000000000005px;background:rgba(228,230,233,.5)"></div>
<div class="vl" style="left:508.0px;top:149.500px;height:434.20000000000005px;background:rgba(228,230,233,.5)"></div>
<div class="vl" style="left:556.0px;top:149.500px;height:434.20000000000005px;background:rgba(228,230,233,.5)"></div>
<div class="vl" style="left:603.5px;top:149.500px;height:434.20000000000005px;background:rgba(228,230,233,.5)"></div>
<div class="vl" style="left:651.5px;top:149.500px;height:434.20000000000005px;background:rgba(228,230,233,.5)"></div>
<div class="vl" style="left:699.0px;top:149.500px;height:434.20000000000005px;background:rgba(228,230,233,.5)"></div>
<div class="vl" style="left:747.0px;top:149.500px;height:434.20000000000005px;background:rgba(228,230,233,.5)"></div>
<div style="left:151px;top:583.7px;width:649px;height:16.299999999999955px;background:#eef1f4"></div>
<div style="left:791.800px;top:172px;width:2px;height:89px;background:#cacaca;border-radius:1px"></div>
<div style="left:792px;top:443px;width:2.200px;height:89px;background:#cacaca;border-radius:1px"></div>
<div style="left:668px;top:16px;width:104px;height:42px;background:#fff;filter:blur(3px);border-radius:6px"></div>
<div style="left:674px;top:15px;width:94px;height:44px;background:#fff;border-radius:4px;filter:blur(1.500px)"></div>
<div style="left:771.500px;top:22.500px;width:19.500px;height:19.500px;border-radius:50%;background:#f4f4f4;filter:blur(0.600px)"></div>
<div style="left:774px;top:25px;width:11px;height:14.500px;border-radius:50%;background:#fcfcfc;filter:blur(0.800px)"></div>
<svg style="left:679.250px;top:21.250px" width="88" height="18" viewBox="0 0 88 18"><rect x="0" y="0" width="4.250" height="3.750" fill="#f08a24"/><g fill="#15609f"><rect x="0" y="5.850" width="4.250" height="11.300"/><path fill-rule="evenodd" d="M6.500 0H18.600Q22.150 0 22.150 3.400V6.850Q22.150 10.250 18.600 10.250H11.500V17.150H6.500ZM11.500 3.750V6.750H16.400Q17.400 6.750 17.400 5.900V4.600Q17.400 3.750 16.400 3.750Z"/><path fill-rule="evenodd" d="M27.500 0H39.250Q42.750 0 42.750 3.500V13.650Q42.750 17.150 39.250 17.150H27.500Q24 17.150 24 13.650V3.500Q24 0 27.500 0ZM30.200 3.900Q29 3.900 29 5.100V12.050Q29 13.250 30.200 13.250H36.550Q37.750 13.250 37.750 12.050V5.100Q37.750 3.900 36.550 3.900Z"/><rect x="63.150" y="14" width="3.300" height="3.150"/><path d="M66.500 6.750H69.200L71.150 14L73.100 6.750H75.750L72.600 17.150H69.650Z"/><path d="M76.750 17.150V6.750H79.400L84.050 13.300V6.750H86.500V17.150H83.900L79.200 10.500V17.150Z"/></g><path d="M62.150 2.050H49.400Q47.050 2.050 47.050 4.300V6.300Q47.050 8.575 49.400 8.575H57.400Q59.750 8.575 59.750 10.900V12.850Q59.750 15.100 57.400 15.100H44.650" fill="none" stroke="#15609f" stroke-width="4.100"/><path d="M47.050 3V7.500M59.750 9.600V14" stroke="#15609f" stroke-width="4.800" fill="none"/></svg>
<div class="t" style="left:679.25px;top:40.70px;font-size:5.8px;color:#f0913a;transform:scaleX(0.9979);transform-origin:0 50%;font-weight:bold;">MAKE F&amp;B BUSINESS BETTER</div>
<div style="left:766px;top:49.300px;width:30px;height:10.200px;background:linear-gradient(90deg,rgba(255,255,255,.9),rgba(255,255,255,.35))"></div>
<div style="left:796.700px;top:24px;width:1.400px;height:543px;background:#d3d3d3"></div>
</body></html>
